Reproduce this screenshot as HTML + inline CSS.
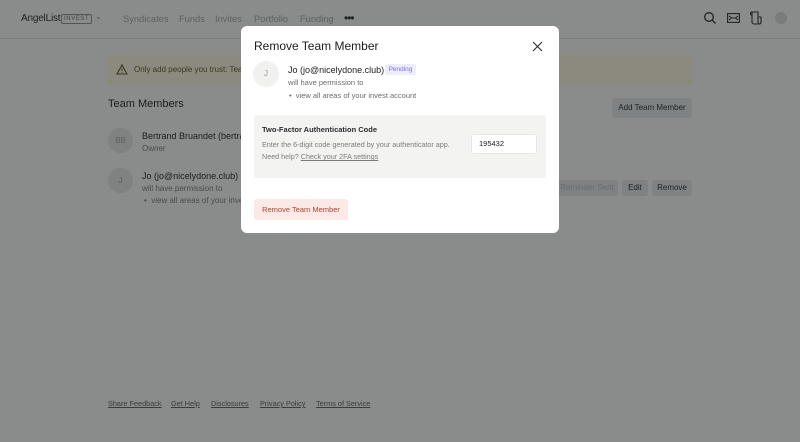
<!DOCTYPE html>
<html><head><style>
*{margin:0;padding:0;box-sizing:border-box}
body{width:800px;height:442px;overflow:hidden;background:#8a8b8b;font-family:"Liberation Sans",sans-serif;position:relative;color:#1e2222}
.a{position:absolute;white-space:nowrap}
.nav{color:#5f6262;font-size:9.3px}
.g{color:#4a4c4c}
.btn{position:absolute;background:#7f8282;border-radius:3px;font-size:8px;color:#1e2121;text-align:center}
.av{position:absolute;border-radius:50%;background:#808282;color:#5d6060;font-size:8px;text-align:center}
.foot{color:#3a3d3d;font-size:7.3px;text-decoration:underline;top:399px}
</style></head><body>
<div class="a" style="left:21px;top:13px;font-size:10px;color:#1e2222;letter-spacing:-.2px">AngelList</div>
<div class="a" style="left:61px;top:14px;font-size:6px;border:1px solid #555;border-radius:2px;padding:0 2px;color:#444;letter-spacing:.6px;line-height:8px">INVEST</div>
<div class="a" style="left:95px;top:12px;font-size:8px;color:#555">⌄</div>
<div class="a nav" style="left:123px;top:14px">Syndicates</div>
<div class="a nav" style="left:179px;top:14px">Funds</div>
<div class="a nav" style="left:215px;top:14px">Invites</div>
<div class="a nav" style="left:254px;top:14px">Portfolio</div>
<div class="a nav" style="left:300px;top:14px">Funding</div>
<div class="a" style="left:344px;top:11px;font-size:12px;color:#222;letter-spacing:-1px">•••</div>
<svg class="a" style="left:703px;top:11px" width="14" height="14" viewBox="0 0 14 14"><circle cx="6" cy="6" r="4.3" fill="none" stroke="#222" stroke-width="1.3"/><path d="M9.2 9.2L12.5 12.5" stroke="#222" stroke-width="1.3"/></svg>
<svg class="a" style="left:727px;top:13px" width="13" height="10" viewBox="0 0 13 10"><rect x=".6" y=".6" width="11.8" height="8.8" fill="none" stroke="#222" stroke-width="1.1"/><path d="M2 3l2.5 2L2 7M11 3L8.5 5 11 7M4.5 5h4" stroke="#222" stroke-width="1" fill="none"/></svg>
<svg class="a" style="left:750px;top:11px" width="13" height="14" viewBox="0 0 13 14"><path d="M2 1h6v10a2 2 0 0 0 2 2H4a2 2 0 0 1-2-2V1zM2 1a1.5 1.5 0 0 0 0 3M8 6h3v5a2 2 0 0 1-1 2" fill="none" stroke="#222" stroke-width="1.1"/></svg>
<div class="a" style="left:775px;top:12px;width:12px;height:12px;border-radius:50%;background:#7a7c7c"></div>
<div class="a" style="left:0;top:38px;width:800px;height:1px;background:#7d7f7f"></div>

<div class="a" style="left:108px;top:55px;width:584px;height:30px;background:#8c8a7e;border-radius:4px"></div>
<svg class="a" style="left:116px;top:64px" width="12" height="11" viewBox="0 0 12 11"><path d="M6 1L11 10H1z" fill="none" stroke="#3a3620" stroke-width="1.1"/><path d="M6 4.5v2.5M6 8v.6" stroke="#3a3620" stroke-width="1"/></svg>
<div class="a" style="left:134px;top:65px;font-size:8px;color:#3b3720">Only add people you trust: Team</div>

<div class="a" style="left:108px;top:98px;font-size:11px;color:#1c1f1f">Team Members</div>
<div class="btn" style="left:612px;top:98px;width:80px;height:20px;line-height:20px">Add Team Member</div>
<div class="av" style="left:108px;top:128px;width:25px;height:25px;line-height:25px">BB</div>
<div class="a" style="left:142px;top:131px;font-size:9px;color:#1c1f1f">Bertrand Bruandet (bertra</div>
<div class="a g" style="left:142px;top:144px;font-size:8px">Owner</div>
<div class="av" style="left:108px;top:168px;width:25px;height:25px;line-height:25px">J</div>
<div class="a" style="left:142px;top:171px;font-size:9px;color:#1c1f1f">Jo (jo@nicelydone.club)</div>
<div class="a g" style="left:142px;top:184px;font-size:8px">will have permission to</div>
<div class="a g" style="left:144px;top:196px;font-size:8px">•&nbsp; view all areas of your invest</div>
<div class="btn" style="left:556px;top:180px;width:62px;height:16px;line-height:16px;color:#6a6c6c">Reminder Sent</div>
<div class="btn" style="left:622px;top:180px;width:26px;height:16px;line-height:16px">Edit</div>
<div class="btn" style="left:652px;top:180px;width:40px;height:16px;line-height:16px">Remove</div>

<div class="a foot" style="left:108px">Share Feedback</div>
<div class="a foot" style="left:171px">Get Help</div>
<div class="a foot" style="left:211px">Disclosures</div>
<div class="a foot" style="left:260px">Privacy Policy</div>
<div class="a foot" style="left:316px">Terms of Service</div>

<div class="a" style="left:241px;top:26px;width:318px;height:207px;background:#fff;border-radius:6px"></div>
<div class="a" style="left:254px;top:39px;font-size:12px;color:#1a1d1d">Remove Team Member</div>
<svg class="a" style="left:532px;top:41px" width="11" height="11" viewBox="0 0 11 11"><path d="M1 1l9 9M10 1L1 10" stroke="#333" stroke-width="1.2"/></svg>
<div class="a" style="left:253px;top:61px;width:26px;height:26px;border-radius:50%;background:#f1f1f0;color:#999;font-size:8px;text-align:center;line-height:26px">J</div>
<div class="a" style="left:288px;top:65px;font-size:9px;color:#1c1f1f">Jo (jo@nicelydone.club)</div>
<div class="a" style="left:385px;top:64px;width:31px;height:11px;border-radius:2px;background:#eeedfb;color:#7b6ef0;font-size:6.5px;text-align:center;line-height:11px">Pending</div>
<div class="a" style="left:288px;top:78px;font-size:7.5px;color:#6a6c6c">will have permission to</div>
<div class="a" style="left:289px;top:91px;font-size:7.5px;color:#6a6c6c">•&nbsp; view all areas of your invest account</div>
<div class="a" style="left:254px;top:115px;width:292px;height:63px;background:#f3f3f2;border-radius:2px"></div>
<div class="a" style="left:262px;top:125px;font-size:7.5px;font-weight:bold;color:#2a2d2d">Two-Factor Authentication Code</div>
<div class="a" style="left:262px;top:140px;font-size:7.2px;color:#7a7c7c">Enter the 6-digit code generated by your authenticator app.</div>
<div class="a" style="left:262px;top:152px;font-size:7.2px;color:#7a7c7c">Need help? <span style="text-decoration:underline">Check your 2FA settings</span></div>
<div class="a" style="left:471px;top:134px;width:66px;height:20px;background:#fff;border-radius:3px;border:1px solid #e6e6e6;font-size:7.5px;line-height:18px;padding-left:7px;color:#1a1a1a">195432</div>
<div class="a" style="left:254px;top:199px;width:94px;height:21px;background:#fbe9e7;border-radius:3px;color:#b3432e;font-size:7.5px;text-align:center;line-height:21px">Remove Team Member</div>
</body></html>
